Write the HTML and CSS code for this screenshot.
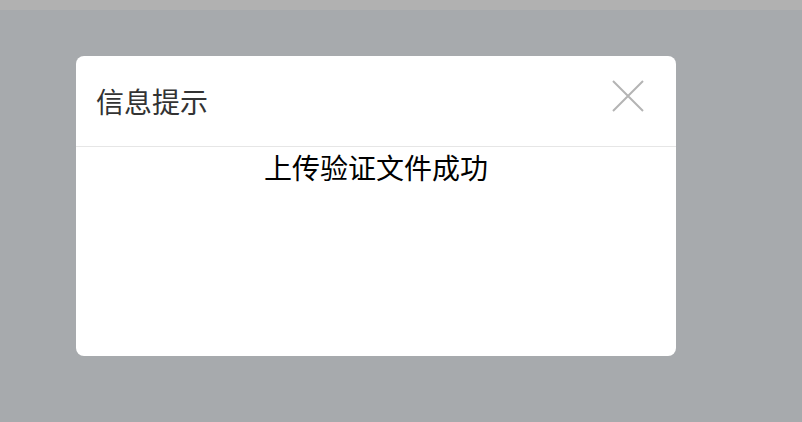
FILE: index.html
```html
<!DOCTYPE html>
<html lang="zh-CN">
<head>
<meta charset="utf-8">
<title>信息提示</title>
<link rel="stylesheet" href="styles.css">
</head>
<body>
<div class="topbar"></div>
<div class="overlay">
  <div class="dialog">
    <div class="dialog-header">
      <span class="dialog-title">信息提示</span>
      <button class="dialog-close" aria-label="关闭">
        <svg width="32" height="32" viewBox="0 0 32 32"><path d="M1 1 L31 31 M31 1 L1 31" stroke="#b4b4b4" stroke-width="2" fill="none"/></svg>
      </button>
    </div>
    <div class="dialog-body">上传验证文件成功</div>
  </div>
</div>
</body>
</html>
```

FILE: styles.css
```css
html, body {
  margin: 0;
  padding: 0;
  height: 100%;
}
body {
  background: #a7aaad;
  font-family: "Noto Sans CJK SC", "Noto Sans", sans-serif;
  display: flex;
  flex-direction: column;
}
.topbar {
  height: 10px;
  background: #b1b1b1;
  flex: none;
}
.overlay {
  padding: 46px 0 0 76px;
}
.dialog {
  width: 600px;
  height: 300px;
  background: #fff;
  border-radius: 8px;
  display: flex;
  flex-direction: column;
}
.dialog-header {
  height: 91px;
  border-bottom: 1px solid #e6e6e6;
  display: flex;
  align-items: center;
  justify-content: space-between;
  padding: 0 32px 0 20px;
  box-sizing: border-box;
}
.dialog-title {
  font-size: 28px;
  color: #333;
  line-height: 40px;
}
.dialog-close {
  align-self: flex-start;
  margin-top: 24px;
  padding: 0;
  border: 0;
  background: none;
  width: 32px;
  height: 32px;
  display: block;
}
.dialog-close svg { display: block; }
.dialog-body {
  text-align: center;
  font-size: 28px;
  line-height: 40px;
  color: #000;
  padding-top: 0;
}
```
